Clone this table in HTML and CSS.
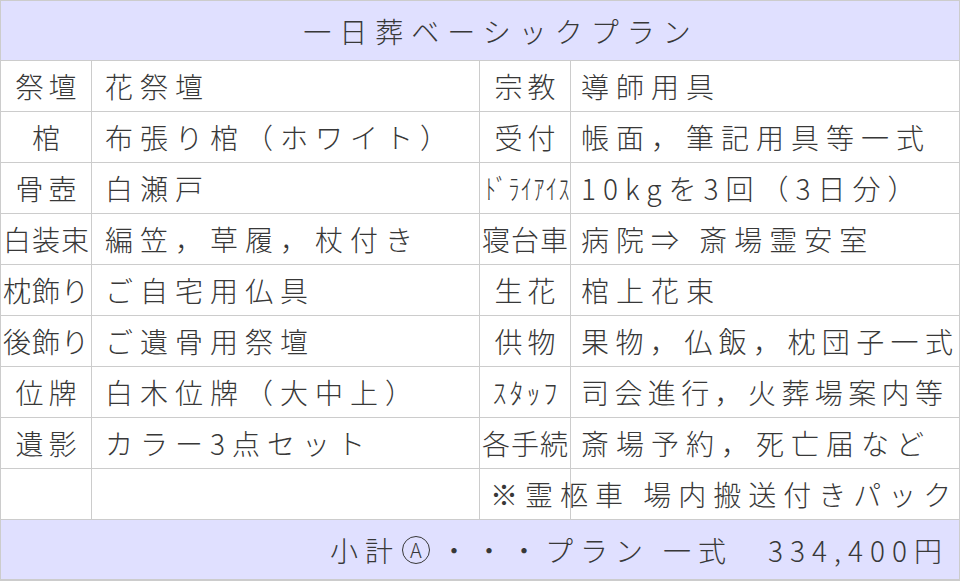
FILE: index.html
```html
<!DOCTYPE html>
<html lang="ja">
<head>
<meta charset="utf-8">
<title>一日葬ベーシックプラン</title>
<link rel="stylesheet" href="styles.css">
</head>
<body>
<div class="sheet">
  <div class="title">一日葬ベーシックプラン</div>

  <div class="label">祭壇</div><div class="value">花祭壇</div>
  <div class="label">宗教</div><div class="value r">導師用具</div>

  <div class="label">棺</div><div class="value">布張り棺（ホワイト）</div>
  <div class="label">受付</div><div class="value r">帳面，筆記用具等一式</div>

  <div class="label">骨壺</div><div class="value">白瀬戸</div>
  <div class="label"><span class="squeeze">ﾄﾞﾗｲｱｲｽ</span></div><div class="value r">10kgを3回（3日分）</div>

  <div class="label three">白装束</div><div class="value">編笠，草履，杖付き</div>
  <div class="label three">寝台車</div><div class="value r">病院⇒ 斎場霊安室</div>

  <div class="label three">枕飾り</div><div class="value">ご自宅用仏具</div>
  <div class="label">生花</div><div class="value r">棺上花束</div>

  <div class="label three">後飾り</div><div class="value">ご遺骨用祭壇</div>
  <div class="label">供物</div><div class="value r tight">果物，仏飯，枕団子一式</div>

  <div class="label">位牌</div><div class="value">白木位牌（大中上）</div>
  <div class="label half">ｽﾀｯﾌ</div><div class="value r tighter">司会進行，火葬場案内等</div>

  <div class="label">遺影</div><div class="value">カラー3点セット</div>
  <div class="label three">各手続</div><div class="value r">斎場予約，死亡届など</div>

  <div class="label"></div><div class="value"></div>
  <div class="note">※霊柩車 場内搬送付きパック</div>

  <div class="total">小計<span class="circled">A</span>・・・プラン 一式　334,400円</div>
</div>
</body>
</html>
```

FILE: styles.css
```css
html, body {
  margin: 0;
  padding: 0;
  background: #ffffff;
}

body {
  font-family: "Noto Sans CJK JP", "Noto Sans", sans-serif;
  font-weight: 300;
  color: #383838;
}

.sheet {
  box-sizing: border-box;
  width: 960px;
  height: 581px;
  display: grid;
  grid-template-columns: 90px 387px 90px 388px;
  grid-template-rows: 59px repeat(9, 50px) 59px;
  gap: 1px;
  padding: 1px 1px 2px 1px;
  background: #cccccc;
}

.title,
.total {
  grid-column: 1 / -1;
  background: #e0e0ff;
  display: flex;
  align-items: center;
  font-size: 28px;
  letter-spacing: 8px;
  white-space: nowrap;
}

.title {
  justify-content: center;
  padding-left: 42px;
}

.total {
  justify-content: flex-end;
  padding-right: 10px;
  letter-spacing: 7px;
}

.circled {
  display: inline-flex;
  align-items: center;
  justify-content: center;
  box-sizing: border-box;
  width: 28px;
  height: 28px;
  margin: 0 10px 0 2px;
  border: 1.5px solid #383838;
  border-radius: 50%;
  font-size: 20px;
  letter-spacing: 0;
  line-height: 1;
}

.label,
.value,
.note {
  background: #ffffff;
  display: flex;
  align-items: center;
  font-size: 28px;
  white-space: nowrap;
}

.label {
  justify-content: center;
  letter-spacing: 5px;
  padding-left: 5px;
}

.label.three {
  letter-spacing: 1px;
  padding-left: 1px;
}

.label.half {
  letter-spacing: 3px;
  padding-left: 3px;
}

.squeeze {
  display: inline-block;
  letter-spacing: 2px;
  transform: scaleX(0.78);
}

.value {
  padding-left: 13px;
  letter-spacing: 7px;
}

.value.r {
  padding-left: 10px;
}

.value.tight {
  letter-spacing: 6.4px;
}

.value.tighter {
  letter-spacing: 5.4px;
}

.note {
  grid-column: 3 / 5;
  position: relative;
  padding-left: 10px;
  letter-spacing: 7px;
}

.note::before {
  content: "";
  position: absolute;
  left: 90px;
  top: 0;
  bottom: 0;
  width: 1px;
  background: #cccccc;
}
```
